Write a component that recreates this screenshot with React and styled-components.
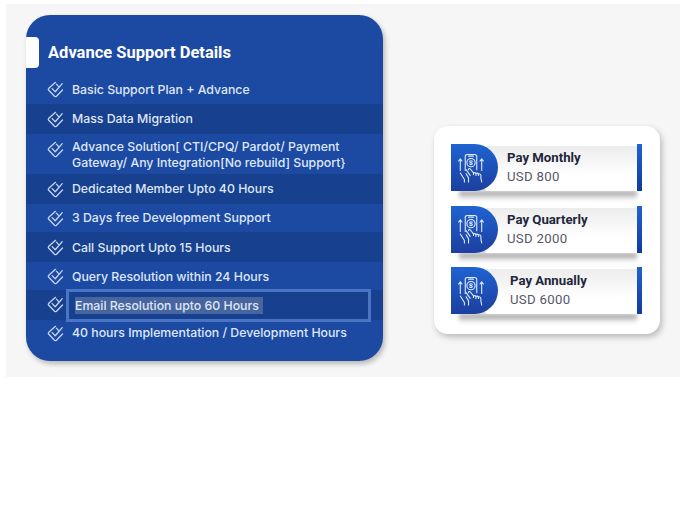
import * as React from 'react';
import styled, { createGlobalStyle } from 'styled-components';

const features = [
  { text: 'Basic Support Plan + Advance', height: 30, nudge: 2 },
  { text: 'Mass Data Migration', height: 30, dark: true },
  { text: 'Advance Solution[ CTI/CPQ/ Pardot/ Payment Gateway/ Any Integration[No rebuild] Support}', height: 40, nudge: 2, lifted: true },
  { text: 'Dedicated Member Upto 40 Hours', height: 30, dark: true },
  { text: '3 Days free Development Support', height: 28 },
  { text: 'Call Support Upto 15 Hours', height: 30, dark: true, nudge: 2 },
  { text: 'Query Resolution within 24 Hours', height: 28, nudge: 2 },
  { text: 'Email Resolution upto 60 Hours', height: 30, dark: true, selected: true },
  { text: '40 hours Implementation / Development Hours', height: 26 }
];

const plans = [
  { name: 'Pay Monthly', price: 'USD 800' },
  { name: 'Pay Quarterly', price: 'USD 2000' },
  { name: 'Pay Annually', price: 'USD 6000', shifted: true }
];

const CheckIcon = () => (
  <svg width="17" height="17" viewBox="0 0 19 19" fill="none" stroke="#c4d4f2" strokeWidth="1.5" strokeLinecap="round" strokeLinejoin="round">
    <path d="M9.5 1.5 L2 8.2 Q1 9.3 2 10.4 L8.4 17 Q9.5 18 10.6 17 L17.3 10" />
    <path d="M5.8 8.5 L9.2 12 L17 3" />
    <path d="M10.5 3.5 L12.8 6" />
  </svg>
);

const PayIcon = () => (
  <svg width="28" height="30" viewBox="0 0 34 36" fill="none" stroke="#e4ecfb" strokeWidth="1.3" strokeLinecap="round" strokeLinejoin="round">
    <path d="M10 21 V4 Q10 1.5 12.5 1.5 H21.5 Q24 1.5 24 4 V20" />
    <path d="M14 3.6 H20" />
    <circle cx="17" cy="11.5" r="5" />
    <path d="M18.6 9.8 Q17 8.6 15.6 9.8 Q15 11.3 17 11.5 Q19 11.8 18.4 13.2 Q17 14.4 15.4 13.2" />
    <path d="M4 21 V7 M2 9.5 L4 7 L6 9.5" />
    <path d="M30 21 V7 M28 9.5 L30 7 L32 9.5" />
    <path d="M4 24 L9 32 V35" />
    <path d="M11 20 L16 27 M14 20 V19 Q15 18 16.5 19.5 L20 24 V26" />
    <path d="M20 24 Q22 23 23 25 V27 M23 24.5 Q25 23.5 26 25.5 V27 M26 25 Q28 24.5 29 26.5 V30 L30 35" />
    <path d="M11 25 L14 30 V35" />
  </svg>
);

const Feature = ({ text, height, dark, selected, nudge, lifted }) => (
  <Row $height={height} $dark={dark} $nudge={nudge}>
    <IconSlot $selected={selected} $lifted={lifted} $nudge={nudge}>
      <CheckIcon />
    </IconSlot>
    {selected ? (
      <SelectionBox>
        <SelectedText>{text}</SelectedText>
      </SelectionBox>
    ) : (
      <RowText>{text}</RowText>
    )}
  </Row>
);

const Plan = ({ name, price, shifted }) => (
  <PlanCard>
    <PlanBadge>
      <PayIcon />
    </PlanBadge>
    <PlanBody $shifted={shifted}>
      <PlanName>{name}</PlanName>
      <PlanPrice>{price}</PlanPrice>
    </PlanBody>
    <PlanEdge />
  </PlanCard>
);

const App = () => (
  <>
    <GlobalStyle />
    <Canvas>
      <SupportCard>
        <CardHeader>
          <HeaderTab />
          <CardTitle>Advance Support Details</CardTitle>
        </CardHeader>
        {features.map(feature => (
          <Feature key={feature.text} {...feature} />
        ))}
      </SupportCard>
      <PlansCard>
        {plans.map(plan => (
          <Plan key={plan.name} {...plan} />
        ))}
      </PlansCard>
    </Canvas>
  </>
);

const GlobalStyle = createGlobalStyle`
  html, body {
    margin: 0;
    background: #ffffff;
  }
`;

const Canvas = styled.div`
  margin: 4px 0 0 6px;
  width: 674px;
  height: 373px;
  box-sizing: border-box;
  padding: 11px 0 0 20px;
  background: #f6f6f7;
  display: flex;
  align-items: flex-start;
  gap: 51px;
`;

const SupportCard = styled.div`
  width: 357px;
  height: 346px;
  flex-shrink: 0;
  background: #1c4aa3;
  border-radius: 24px;
  box-shadow: 2px 3px 5px rgba(0, 0, 0, 0.25);
  overflow: hidden;
`;

const CardHeader = styled.div`
  height: 59px;
  padding-top: 22px;
  box-sizing: border-box;
  display: flex;
  align-items: flex-start;
  gap: 9px;
`;

const HeaderTab = styled.div`
  width: 13px;
  height: 31px;
  background: #ffffff;
  border-radius: 0 4px 4px 0;
`;

const CardTitle = styled.div`
  font-family: Roboto, sans-serif;
  font-weight: 700;
  font-size: 16.5px;
  line-height: 32px;
  color: #ffffff;
`;

const Row = styled.div`
  height: ${p => p.$height}px;
  box-sizing: border-box;
  padding-left: 20px;
  padding-top: ${p => p.$nudge || 0}px;
  display: flex;
  align-items: center;
  background: ${p => (p.$dark ? '#17408f' : 'transparent')};
`;

const IconSlot = styled.div`
  width: 19px;
  height: 19px;
  flex-shrink: 0;
  display: flex;
  align-items: center;
  justify-content: center;
  margin-right: ${p => (p.$selected ? '1px' : '7px')};
  margin-top: ${p => {
    if (p.$lifted) return '-12px';
    if (p.$selected) return '-2px';
    return p.$nudge ? '-2px' : '0';
  }};
`;

const RowText = styled.div`
  width: 282px;
  font-family: Inter, sans-serif;
  font-weight: 500;
  font-size: 12.3px;
  line-height: 16px;
  color: #dfe7f7;
`;

const SelectionBox = styled.div`
  width: 305px;
  height: 33px;
  flex-shrink: 0;
  box-sizing: border-box;
  border: 3px solid #4a75c4;
  padding-left: 6px;
  display: flex;
  align-items: center;
  background: #17408f;
`;

const SelectedText = styled.span`
  padding-right: 4px;
  font-family: Inter, sans-serif;
  font-weight: 500;
  font-size: 12.3px;
  line-height: 17px;
  color: #dfe7f7;
  background: #47669f;
`;

const PlansCard = styled.div`
  width: 226px;
  height: 208px;
  margin-top: 111px;
  flex-shrink: 0;
  box-sizing: border-box;
  padding: 18px 0 0 17px;
  background: #ffffff;
  border-radius: 14px;
  box-shadow: 2px 3px 6px rgba(0, 0, 0, 0.25);
  display: flex;
  flex-direction: column;
  gap: 14.5px;
`;

const PlanCard = styled.div`
  position: relative;
  width: 191px;
  height: 47px;
  display: flex;
  flex-shrink: 0;

  &::after {
    content: '';
    position: absolute;
    left: 8px;
    right: 5px;
    top: 100%;
    height: 9px;
    background: linear-gradient(180deg, #909090, rgba(220, 220, 220, 0));
    filter: blur(2px);
  }
`;

const PlanBadge = styled.div`
  position: relative;
  width: 47px;
  flex-shrink: 0;
  border-radius: 0 24px 24px 0;
  background: linear-gradient(180deg, #1f63d2, #1c3f9f);
  display: flex;
  align-items: center;
  justify-content: center;
  padding-right: 8px;
  box-sizing: border-box;
  z-index: 2;
`;

const PlanBody = styled.div`
  position: relative;
  flex: 1;
  margin: 2px 0 0 -12px;
  padding: 0 0 3px ${p => (p.$shifted ? '24px' : '21px')};
  background: linear-gradient(180deg, #ececec, #ffffff 65%);
  display: flex;
  flex-direction: column;
  justify-content: center;
  z-index: 1;
`;

const PlanName = styled.div`
  font-family: Roboto, sans-serif;
  font-weight: 700;
  font-size: 13.2px;
  line-height: 19px;
  color: #22263a;
`;

const PlanPrice = styled.div`
  font-family: Roboto, sans-serif;
  font-size: 13.2px;
  letter-spacing: 0.3px;
  line-height: 19px;
  color: #55586a;
`;

const PlanEdge = styled.div`
  position: relative;
  width: 5px;
  flex-shrink: 0;
  background: linear-gradient(180deg, #1f63d2, #123a9c);
  z-index: 1;
`;

export default App;
